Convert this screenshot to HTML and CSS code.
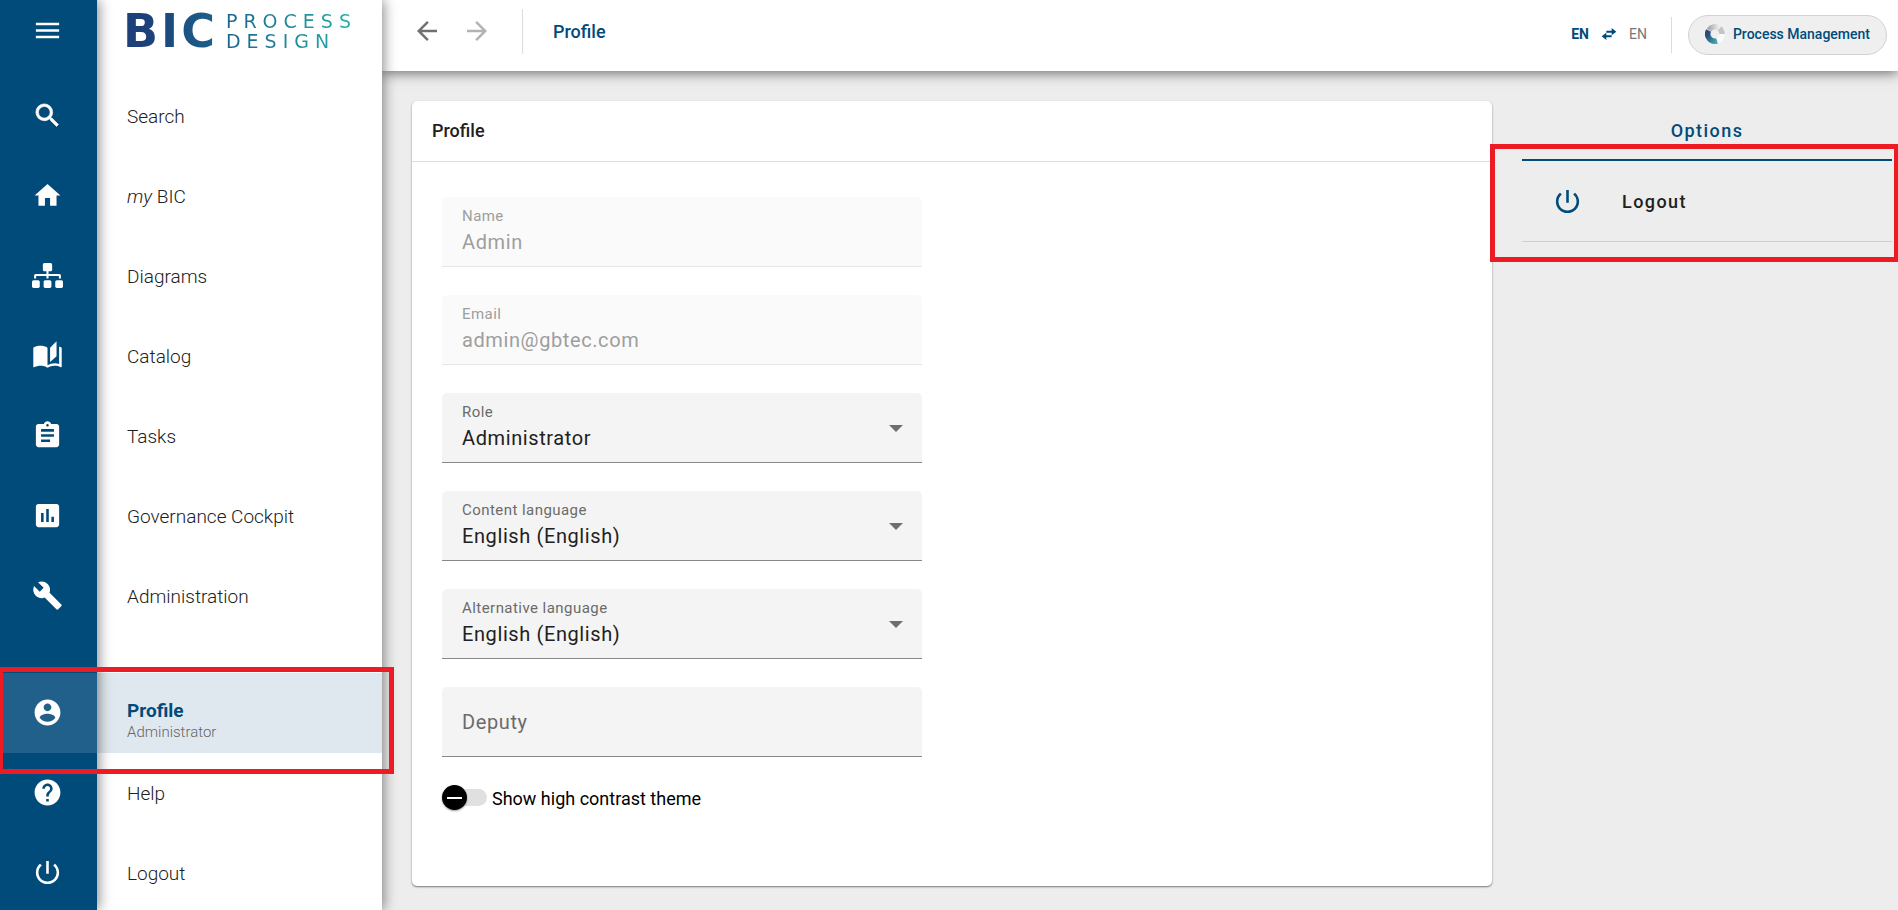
FILE: index.html
```html
<!DOCTYPE html>
<html lang="en">
<head>
<meta charset="utf-8">
<title>Profile - BIC Process Design</title>
<link rel="stylesheet" href="styles.css">
</head>
<body>
<svg class="sprite" aria-hidden="true">
  <symbol id="i-menu" viewBox="0 0 24 24"><path d="M3 18h18v-2H3v2zm0-5h18v-2H3v2zm0-7v2h18V6H3z"/></symbol>
  <symbol id="i-search" viewBox="0 0 24 24"><path stroke="currentColor" stroke-width="0.500" d="M15.5 14h-.79l-.28-.27A6.471 6.471 0 0 0 16 9.5 6.5 6.5 0 1 0 9.5 16c1.61 0 3.09-.59 4.23-1.57l.27.28v.79l5 4.99L20.49 19l-4.99-5zm-6 0C7.01 14 5 11.99 5 9.5S7.01 5 9.5 5 14 7.01 14 9.5 11.99 14 9.5 14z"/></symbol>
  <symbol id="i-home" viewBox="0 0 24 24"><path d="M10 20v-6h4v6h5v-8h3L12 3 2 12h3v8z"/></symbol>
  <symbol id="i-tree" viewBox="0 0 30 30"><path d="M12 3h6a1.500 1.500 0 0 1 1.500 1.500v5A1.500 1.500 0 0 1 18 11h-2v2.500h10.500A1.500 1.500 0 0 1 28 15v3h-2v-2.500H16V18h-2v-2.500H4V18H2v-3a1.500 1.500 0 0 1 1.500-1.500H14V11h-2a1.500 1.500 0 0 1-1.500-1.500v-5A1.500 1.500 0 0 1 12 3z"/><rect x="0" y="19.500" width="7.500" height="7.500" rx="1.500"/><rect x="11.250" y="19.500" width="7.500" height="7.500" rx="1.500"/><rect x="22.500" y="19.500" width="7.500" height="7.500" rx="1.500"/></symbol>
  <symbol id="i-book" viewBox="0 0 24 24"><path d="M19 1l-5 5v11l5-4.500V1zM1 6v14.650c0 .25.25.5.5.5.1 0 .15-.05.25-.05C3.100 20.450 5.050 20 6.500 20c1.950 0 4.050.4 5.500 1.500V6c-1.450-1.100-3.550-1.500-5.500-1.500S2.450 4.900 1 6zm22 13.500V6c-.6-.45-1.250-.75-2-1v13.500c-1.100-.35-2.300-.5-3.500-.5-1.700 0-4.150.65-5.500 1.500v2c1.350-.85 3.800-1.500 5.500-1.500 1.650 0 3.350.3 4.750 1.050.1.05.15.05.25.05.25 0 .5-.25.5-.5v-1.100z"/></symbol>
  <symbol id="i-tasks" viewBox="0 0 24 24"><path d="M19 3h-4.180C14.400 1.840 13.300 1 12 1c-1.300 0-2.400.84-2.820 2H5c-1.100 0-2 .9-2 2v14c0 1.100.9 2 2 2h14c1.100 0 2-.9 2-2V5c0-1.100-.9-2-2-2zm-7 0c.55 0 1 .45 1 1s-.45 1-1 1-1-.45-1-1 .45-1 1-1zm2 14H7v-2h7v2zm3-4H7v-2h10v2zm0-4H7V7h10v2z"/></symbol>
  <symbol id="i-chart" viewBox="0 0 24 24"><path d="M19 3H5c-1.100 0-2 .9-2 2v14c0 1.100.9 2 2 2h14c1.100 0 2-.9 2-2V5c0-1.100-.9-2-2-2zM9 17H7v-7h2v7zm4 0h-2V7h2v10zm4 0h-2v-4h2v4z"/></symbol>
  <symbol id="i-build" viewBox="0 0 24 24"><path d="M22.700 19l-9.100-9.100c.9-2.300.4-5-1.500-6.900-2-2-5-2.400-7.400-1.300L9 6 6 9 1.600 4.700C.4 7.100.9 10.100 2.900 12.100c1.900 1.900 4.600 2.400 6.900 1.500l9.100 9.100c.4.4 1 .4 1.400 0l2.300-2.300c.5-.4.5-1.100.1-1.400z"/></symbol>
  <symbol id="i-user" viewBox="0 0 24 24"><path d="M12 2C6.480 2 2 6.480 2 12s4.480 10 10 10 10-4.480 10-10S17.520 2 12 2zm0 3c1.660 0 3 1.340 3 3s-1.340 3-3 3-3-1.340-3-3 1.340-3 3-3zm0 14.200c-2.500 0-4.710-1.280-6-3.220.03-1.990 4-3.080 6-3.080 1.990 0 5.970 1.090 6 3.080-1.290 1.940-3.500 3.220-6 3.220z"/></symbol>
  <symbol id="i-help" viewBox="0 0 24 24"><path d="M12 2C6.480 2 2 6.480 2 12s4.480 10 10 10 10-4.480 10-10S17.520 2 12 2zm1 17h-2v-2h2v2zm2.070-7.750l-.9.920C13.450 12.900 13 13.500 13 15h-2v-.5c0-1.100.45-2.100 1.170-2.830l1.240-1.260c.37-.36.59-.86.59-1.410 0-1.100-.9-2-2-2s-2 .9-2 2H8c0-2.210 1.790-4 4-4s4 1.790 4 4c0 .88-.36 1.680-.93 2.250z"/></symbol>
  <symbol id="i-power" viewBox="0 0 24 24"><path d="M13 3h-2v10h2V3zm4.830 2.170l-1.420 1.420A6.920 6.920 0 0 1 19 12c0 3.870-3.130 7-7 7s-7-3.130-7-7c0-2.190 1.010-4.140 2.580-5.420L6.170 5.170A8.932 8.932 0 0 0 3 12a9 9 0 0 0 18 0c0-2.740-1.230-5.180-3.170-6.830z"/></symbol>
  <symbol id="i-arrow" viewBox="0 0 24 24"><path d="M20 11H7.830l5.590-5.590L12 4l-8 8 8 8 1.410-1.410L7.830 13H20v-2z"/></symbol>
  <symbol id="i-swap" viewBox="0 0 24 24"><path d="M16 3l7 5.500-7 5.500v-4H8V7h8zM8 10l-7 5.500L8 21v-4h8v-3H8z"/></symbol>
</svg>
<div class="app">
  <nav class="rail" aria-label="Shortcuts">
    <button class="rail-toggle" aria-label="Toggle menu"><svg class="icon"><use href="#i-menu"/></svg></button>
    <a class="rail-item" href="#search" aria-label="Search"><svg class="icon"><use href="#i-search"/></svg></a>
    <a class="rail-item" href="#home" aria-label="my BIC"><svg class="icon"><use href="#i-home"/></svg></a>
    <a class="rail-item" href="#diagrams" aria-label="Diagrams"><svg class="icon"><use href="#i-tree"/></svg></a>
    <a class="rail-item" href="#catalog" aria-label="Catalog"><svg class="icon"><use href="#i-book"/></svg></a>
    <a class="rail-item" href="#tasks" aria-label="Tasks"><svg class="icon"><use href="#i-tasks"/></svg></a>
    <a class="rail-item" href="#cockpit" aria-label="Governance Cockpit"><svg class="icon"><use href="#i-chart"/></svg></a>
    <a class="rail-item" href="#administration" aria-label="Administration"><svg class="icon"><use href="#i-build"/></svg></a>
    <a class="rail-item rail-active" href="#profile" aria-label="Profile"><svg class="icon"><use href="#i-user"/></svg></a>
    <a class="rail-item" href="#help" aria-label="Help"><svg class="icon"><use href="#i-help"/></svg></a>
    <a class="rail-item" href="#logout" aria-label="Logout"><svg class="icon"><use href="#i-power"/></svg></a>
  </nav>

  <nav class="menu" aria-label="Main">
    <div class="brand">
      <span class="brand-mark">BIC</span>
      <span class="brand-name"><span>PROCESS</span><span>DESIGN</span></span>
    </div>
    <a class="menu-item" href="#search">Search</a>
    <a class="menu-item" href="#home"><span><i>my</i> BIC</span></a>
    <a class="menu-item" href="#diagrams">Diagrams</a>
    <a class="menu-item" href="#catalog">Catalog</a>
    <a class="menu-item" href="#tasks">Tasks</a>
    <a class="menu-item" href="#cockpit">Governance Cockpit</a>
    <a class="menu-item" href="#administration">Administration</a>
    <a class="menu-item menu-active" href="#profile"><strong>Profile</strong><small>Administrator</small></a>
    <a class="menu-item" href="#help">Help</a>
    <a class="menu-item" href="#logout">Logout</a>
  </nav>

  <div class="page">
    <header class="topbar">
      <div class="topbar-left">
        <button class="nav-btn" aria-label="Back"><svg class="icon-sm"><use href="#i-arrow"/></svg></button>
        <button class="nav-btn nav-next" aria-label="Forward" disabled><svg class="icon-sm"><use href="#i-arrow"/></svg></button>
        <h1 class="crumb">Profile</h1>
      </div>
      <div class="topbar-right">
        <button class="lang"><b>EN</b><svg class="lang-swap"><use href="#i-swap"/></svg><span>EN</span></button>
        <div class="chip-wrap">
          <button class="chip">
            <svg class="chip-logo" viewBox="0 0 20 20">
              <defs>
                <linearGradient id="ring-a" x1="0" y1="0" x2="1" y2="1"><stop offset="0.200" stop-color="#2b4a7c"/><stop offset="1" stop-color="#3fa9ab"/></linearGradient>
                <linearGradient id="ring-b" x1="0" y1="0" x2="1" y2="0"><stop offset="0" stop-color="#a9a9a9"/><stop offset="1" stop-color="#eeeeee"/></linearGradient>
              </defs>
              <g fill="none" stroke-width="5.500">
                <path d="M4 6A7.200 7.200 0 0 1 14 4" stroke="url(#ring-b)"/>
                <path d="M14.500 4.500A7.200 7.200 0 0 1 17 10" stroke="#c4c4c4"/>
                <path d="M17 10A7.200 7.200 0 0 1 12 17" stroke="#fafafa"/>
                <path d="M12 16.800A7.200 7.200 0 0 1 3.600 6.500" stroke="url(#ring-a)"/>
              </g>
            </svg>
            Process Management
          </button>
        </div>
      </div>
    </header>

    <main class="content">
      <section class="card">
        <h2 class="card-title">Profile</h2>
        <form class="form">
          <div class="field field-off"><label for="name">Name</label><input id="name" value="Admin" disabled></div>
          <div class="field field-off"><label for="email">Email</label><input id="email" type="email" value="admin@gbtec.com" disabled></div>
          <div class="field field-select"><label for="role">Role</label><select id="role"><option>Administrator</option></select></div>
          <div class="field field-select"><label for="content-lang">Content language</label><select id="content-lang"><option>English (English)</option></select></div>
          <div class="field field-select"><label for="alt-lang">Alternative language</label><select id="alt-lang"><option>English (English)</option></select></div>
          <div class="field field-empty"><input id="deputy" aria-label="Deputy" placeholder="Deputy"></div>
          <label class="toggle"><input type="checkbox" role="switch">Show high contrast theme</label>
        </form>
      </section>

      <aside class="options">
        <h2 class="options-title">Options</h2>
        <button class="option"><svg class="icon"><use href="#i-power"/></svg>Logout</button>
      </aside>
    </main>
  </div>
  <div class="marker marker-profile"></div>
  <div class="marker marker-logout"></div>
</div>
</body>
</html>
```

FILE: styles.css
```css
:root {
  --blue: #004b7a;
  --gray: #ededed;
  --text: #212121;
}

* { box-sizing: border-box; }

body {
  margin: 0;
  font-family: Roboto, "Liberation Sans", sans-serif;
  font-size: 18px;
  color: var(--text);
  background: var(--gray);
}

h1, h2 { margin: 0; font-size: 18px; font-weight: 500; }
a { color: inherit; text-decoration: none; }
button {
  border: 0;
  padding: 0;
  background: none;
  font: inherit;
  color: inherit;
  cursor: pointer;
}

.sprite { display: none; }
.icon { width: 31px; height: 31px; fill: currentColor; flex: none; }
.icon-sm { width: 30px; height: 30px; fill: currentColor; display: block; }

.app {
  position: relative;
  display: flex;
  height: 100vh;
  overflow: hidden;
}

/* Icon rail */
.rail {
  z-index: 3;
  flex: none;
  width: 97px;
  background: var(--blue);
  color: #fff;
  box-shadow: 2px 0 12px rgba(0, 0, 0, 0.45);
}
.rail-toggle, .rail-item {
  display: flex;
  align-items: center;
  justify-content: center;
  width: 100%;
  padding: 0 3px 2px 0;
}
.rail-toggle { height: 62px; margin-bottom: 14px; }
.rail-item { height: 80px; }
.rail-active { margin-top: 37px; background: #21608a; }

/* Text menu */
.menu {
  z-index: 2;
  flex: none;
  width: 285px;
  background: #fff;
  box-shadow: 2px 0 12px rgba(0, 0, 0, 0.45);
}
.brand {
  display: flex;
  gap: 8px;
  width: 240px;
  height: 62px;
  margin: 0 0 14px 26px;
  align-items: center;
  background: linear-gradient(90deg, #1d4079 10%, #1b6e90 50%, #27b5ab);
  -webkit-background-clip: text;
  background-clip: text;
  color: transparent;
  font-family: "DejaVu Sans", sans-serif;
}
.brand-mark {
  font-size: 46px;
  line-height: 62px;
  font-weight: 700;
  letter-spacing: 3px;
}
.brand-name {
  display: flex;
  flex-direction: column;
  font-size: 19px;
  line-height: 20px;
  letter-spacing: 6px;
}
.menu-item {
  display: flex;
  flex-direction: column;
  justify-content: center;
  height: 80px;
  padding-left: 30px;
  font-size: 19px;
  font-weight: 300;
}
.menu-active {
  margin-top: 37px;
  padding-top: 14px;
  background: #e0e8ef;
}
.menu-active strong { color: var(--blue); font-weight: 700; line-height: 24px; }
.menu-active small { font-size: 15px; line-height: 18px; color: #666; }

/* Top bar */
.page { flex: 1; display: flex; flex-direction: column; min-width: 0; }
.topbar {
  z-index: 1;
  flex: none;
  display: flex;
  justify-content: space-between;
  align-items: flex-start;
  height: 71px;
  background: #fff;
  box-shadow: 0 2px 12px rgba(0, 0, 0, 0.55);
}
.topbar-left {
  display: flex;
  align-items: center;
  gap: 20px;
  height: 62px;
  padding-left: 30px;
}
.nav-btn { color: #707070; }
.nav-next { color: #b3b3b3; transform: scaleX(-1); }
.crumb {
  margin-left: 10px;
  padding: 1px 0 0 30px;
  border-left: 1px solid #dcdcdc;
  line-height: 44px;
  color: var(--blue);
}
.topbar-right {
  display: flex;
  align-items: center;
  gap: 24px;
  height: 69px;
  padding-right: 11px;
  font-size: 14px;
}
.lang {
  display: flex;
  align-items: center;
  gap: 12px;
  padding-bottom: 2px;
  color: #777;
}
.lang b { color: var(--blue); }
.lang-swap { width: 16px; height: 16px; fill: var(--blue); }
.chip-wrap {
  display: flex;
  align-items: center;
  height: 36px;
  padding-left: 16px;
  border-left: 1px solid #dcdcdc;
}
.chip {
  display: flex;
  align-items: center;
  gap: 8px;
  height: 40px;
  padding: 0 16px 1px;
  border: 1px solid #d2d2d2;
  border-radius: 20px;
  background: #efefef;
  color: var(--blue);
  font-weight: 500;
}
.chip-logo { width: 20px; height: 20px; }

/* Content */
.content {
  flex: 1;
  display: flex;
  gap: 30px;
  padding: 30px 6px 24px 30px;
}
.card {
  flex: 1;
  background: #fff;
  border-radius: 5px;
  box-shadow: 0 1px 2px rgba(0, 0, 0, 0.5);
}
.card-title {
  padding-left: 20px;
  line-height: 60px;
  border-bottom: 1px solid #dcdcdc;
}
.form {
  display: flex;
  flex-direction: column;
  gap: 28px;
  max-width: 510px;
  padding: 35px 0 0 30px;
}
.field {
  position: relative;
  display: flex;
  flex-direction: column;
  height: 70px;
  padding-top: 9px;
  border-bottom: 1px solid #888;
  border-radius: 5px 5px 0 0;
  background: #f4f4f4;
}
.field label {
  padding-left: 20px;
  font-size: 15px;
  line-height: 20px;
  letter-spacing: 0.03em;
  color: #6b6b6b;
}
.field input, .field select {
  appearance: none;
  width: 100%;
  height: 32px;
  border: 0;
  padding: 0 20px;
  background: none;
  font: inherit;
  font-size: 20px;
  letter-spacing: 0.03em;
  color: var(--text);
  outline: 0;
}
.field-off { background: #fafafa; border-color: #e6e6e6; }
.field-off label, .field-off input { color: #9e9e9e; }
.field-empty { padding: 0; justify-content: center; }
.field-empty input::placeholder { color: #6b6b6b; opacity: 1; }
.field-select::after {
  content: "";
  position: absolute;
  right: 19px;
  top: 32px;
  border: 7px solid transparent;
  border-top-color: #6e6e6e;
  border-bottom: 0;
  pointer-events: none;
}

.toggle { display: flex; align-items: center; gap: 5px; color: #000; }
.toggle input {
  appearance: none;
  position: relative;
  width: 45px;
  height: 26px;
  margin: 0;
}
.toggle input::before {
  content: "";
  position: absolute;
  inset: 4px 0 5px 4px;
  border-radius: 9px;
  background: #e0e0e0;
}
.toggle input::after {
  content: "";
  position: absolute;
  left: 0;
  top: 0;
  width: 25px;
  height: 25px;
  border-radius: 50%;
  background: linear-gradient(#fff, #fff) center / 15px 2px no-repeat #000;
  box-shadow: 0 1px 2px rgba(0, 0, 0, 0.4);
}

/* Options panel */
.options { flex: none; width: 370px; }
.options-title {
  height: 60px;
  line-height: 60px;
  border-bottom: 2px solid var(--blue);
  text-align: center;
  letter-spacing: 0.08em;
  color: var(--blue);
}
.option {
  display: flex;
  align-items: center;
  gap: 39px;
  width: 100%;
  height: 81px;
  padding-left: 30px;
  border-bottom: 1px solid #cfcfcf;
  font-weight: 500;
  letter-spacing: 0.08em;
}
.option .icon { color: var(--blue); }

/* Highlight frames over the page */
.marker {
  position: absolute;
  z-index: 5;
  border: 5px solid #ed1c24;
  pointer-events: none;
}
.marker-profile { left: -2px; top: 667px; width: 396px; height: 107px; }
.marker-logout { right: -1px; top: 144px; width: 409px; height: 118px; }
```
